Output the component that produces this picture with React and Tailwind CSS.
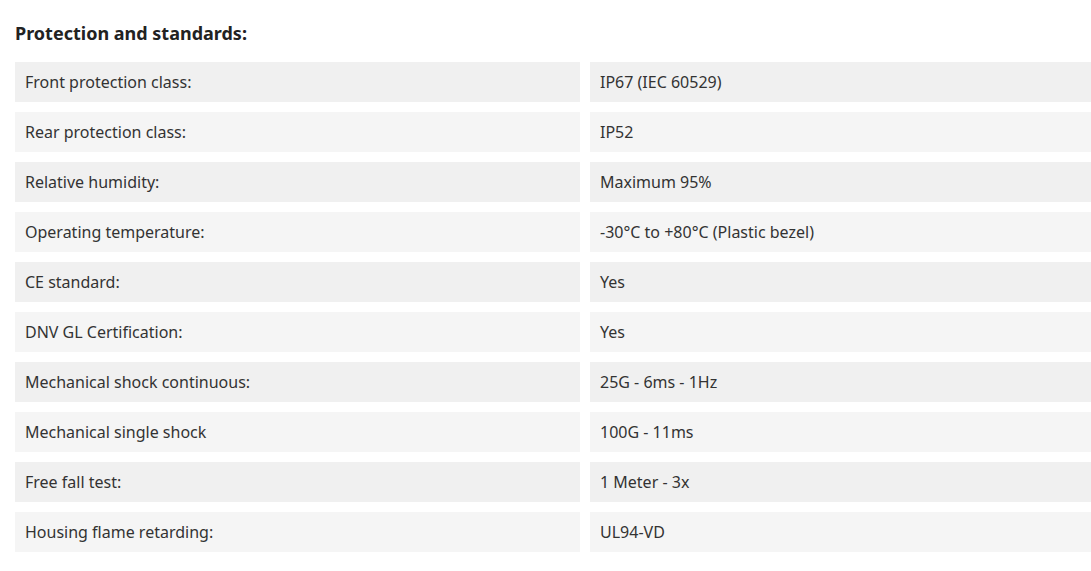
import React from 'react';

const rows = [
  ['Front protection class:', 'IP67 (IEC 60529)'],
  ['Rear protection class:', 'IP52'],
  ['Relative humidity:', 'Maximum 95%'],
  ['Operating temperature:', '-30°C to +80°C (Plastic bezel)'],
  ['CE standard:', 'Yes'],
  ['DNV GL Certification:', 'Yes'],
  ['Mechanical shock continuous:', '25G - 6ms - 1Hz'],
  ['Mechanical single shock', '100G - 11ms'],
  ['Free fall test:', '1 Meter - 3x'],
  ['Housing flame retarding:', 'UL94-VD'],
];

const App = () => {
  return (
    <div
      className="bg-white min-h-screen pl-[15px] pt-[20px] text-[#333]"
      style={{ fontFamily: '"Noto Sans", "Open Sans", sans-serif' }}
    >
      <h2 className="text-[18px] font-bold leading-[26px] mb-[16px] text-[#222]">
        Protection and standards:
      </h2>
      <div className="flex flex-col gap-[10px]">
        {rows.map(([label, value], i) => (
          <div key={label} className="grid grid-cols-[565px_1fr] gap-[10px]">
            <div
              className={`h-[40px] flex items-center px-[10px] text-[16px] ${
                i % 2 === 0 ? 'bg-[#f0f0f0]' : 'bg-[#f5f5f5]'
              }`}
            >
              {label}
            </div>
            <div
              className={`h-[40px] flex items-center px-[10px] text-[16px] ${
                i % 2 === 0 ? 'bg-[#f0f0f0]' : 'bg-[#f5f5f5]'
              }`}
            >
              {value}
            </div>
          </div>
        ))}
      </div>
    </div>
  );
};

export default App;
